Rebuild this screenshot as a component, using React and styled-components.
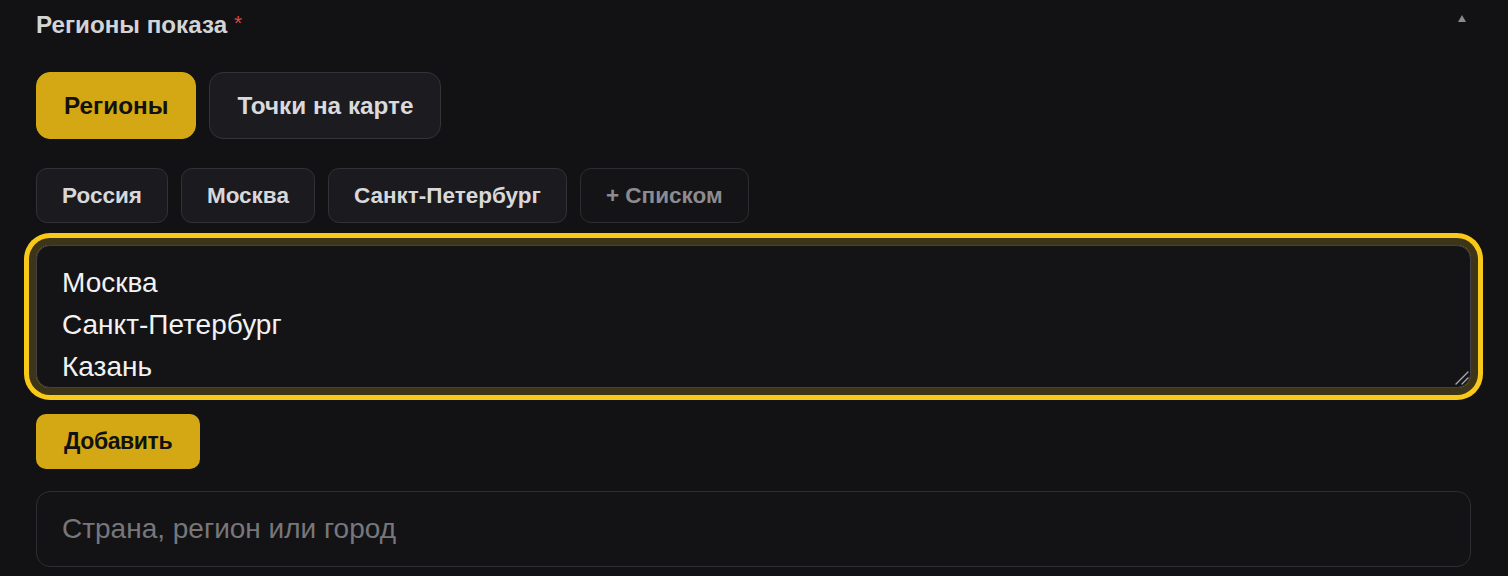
import React, { useState } from 'react';
import styled, { createGlobalStyle } from 'styled-components';

const GlobalStyle = createGlobalStyle`
  html, body {
    margin: 0;
    padding: 0;
    background: #121214;
    overflow: hidden;
  }
  body {
    font-family: "Liberation Sans", Arial, sans-serif;
  }
`;

const S = {
  Page: styled.div`
    display: flex;
    flex-direction: column;
    padding: 0 37px 0 36px;
    height: 576px;
    box-sizing: border-box;
  `,
  Header: styled.div`
    display: flex;
    justify-content: space-between;
    align-items: flex-start;
    height: 50px;
  `,
  Label: styled.div`
    font-size: 24.2px;
    line-height: 46px;
    font-weight: 700;
    color: #d4d4d6;
  `,
  Star: styled.span`
    color: #d24b4f;
    font-size: 21px;
    font-weight: 400;
    margin-left: 7px;
    vertical-align: 3px;
  `,
  Caret: styled.span`
    width: 0;
    height: 0;
    margin: 15px 5px 0 0;
    border-left: 4.5px solid transparent;
    border-right: 4.5px solid transparent;
    border-bottom: 7px solid #8a8a8e;
  `,
  Row: styled.div`
    display: flex;
    gap: 13px;
    margin-top: ${p => p.$top}px;
  `,
  Tab: styled.button`
    height: 67px;
    padding: 0 27px;
    border-radius: 14px;
    font-family: inherit;
    font-size: 24.3px;
    font-weight: 700;
    cursor: pointer;
    border: 1px solid ${p => (p.$active ? '#d3a814' : '#333338')};
    background: ${p => (p.$active ? '#d3a814' : '#1c1c20')};
    color: ${p => (p.$active ? '#111111' : '#dadadc')};
  `,
  Chip: styled.button`
    height: 55px;
    padding: 0 25px;
    border-radius: 11px;
    font-family: inherit;
    font-size: 22.5px;
    font-weight: 700;
    cursor: pointer;
    border: 1px solid ${p => (p.$ghost ? '#2d2d31' : '#323236')};
    background: ${p => (p.$ghost ? '#141416' : '#1b1b1f')};
    color: ${p => (p.$ghost ? '#8c8c90' : '#d8d8da')};
  `,
  AreaWrap: styled.div`
    position: relative;
    margin-top: 22px;
    height: 143px;
    border-radius: 14px;
    box-shadow: 0 0 0 7px #3d3519, 0 0 0 12px #f9c919;
  `,
  Area: styled.textarea`
    display: block;
    height: 100%;
    box-sizing: border-box;
    width: 100%;
    padding: 16px 25px;
    border: 1px solid #424246;
    border-radius: 14px;
    background: #141416;
    color: #f2f2f2;
    font-family: "Liberation Sans", Arial, sans-serif;
    font-size: 28px;
    line-height: 42px;
    outline: none;
    overflow: hidden;
    resize: none;
  `,
  Grip: styled.svg`
    position: absolute;
    right: 2px;
    bottom: 3px;
    width: 14px;
    height: 14px;
    pointer-events: none;
  `,
  Add: styled.button`
    align-self: flex-start;
    margin-top: 26px;
    height: 55px;
    padding: 0 28px;
    border: none;
    border-radius: 10px;
    background: #d3a814;
    color: #111111;
    font-family: inherit;
    font-size: 23px;
    font-weight: 700;
    letter-spacing: -0.4px;
    cursor: pointer;
  `,
  Input: styled.input`
    margin-top: 22px;
    height: 76px;
    box-sizing: border-box;
    width: 100%;
    padding: 0 25px;
    border: 1px solid #2e2e32;
    border-radius: 14px;
    background: #131315;
    color: #f2f2f2;
    font-family: "Liberation Sans", Arial, sans-serif;
    font-size: 28px;
    outline: none;
    &::placeholder {
      color: #77777b;
    }
  `,
};

const chips = ['Россия', 'Москва', 'Санкт-Петербург'];

export default function App() {
  const [mode, setMode] = useState('regions');
  const [text, setText] = useState('Москва\nСанкт-Петербург\nКазань');

  return (
    <>
      <GlobalStyle />
      <S.Page>
        <S.Header>
          <S.Label>
            Регионы показа<S.Star>*</S.Star>
          </S.Label>
          <S.Caret />
        </S.Header>
        <S.Row $top={22}>
          <S.Tab $active={mode === 'regions'} onClick={() => setMode('regions')}>Регионы</S.Tab>
          <S.Tab $active={mode === 'points'} onClick={() => setMode('points')}>Точки на карте</S.Tab>
        </S.Row>
        <S.Row $top={29}>
          {chips.map(c => (
            <S.Chip key={c}>{c}</S.Chip>
          ))}
          <S.Chip $ghost>+ Списком</S.Chip>
        </S.Row>
        <S.AreaWrap>
          <S.Area value={text} onChange={e => setText(e.target.value)} />
          <S.Grip viewBox="0 0 14 14">
            <path d="M1 13 L13 1 M7 13 L13 7" stroke="#a8a8ac" strokeWidth="1.4" strokeLinecap="round" />
          </S.Grip>
        </S.AreaWrap>
        <S.Add>Добавить</S.Add>
        <S.Input placeholder="Страна, регион или город" />
      </S.Page>
    </>
  );
}
